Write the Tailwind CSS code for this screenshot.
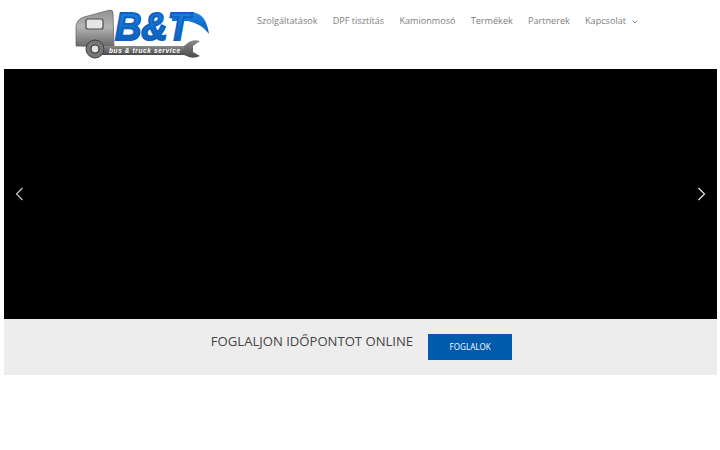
<!DOCTYPE html>
<html lang="hu">
<head>
  <meta charset="UTF-8" />
  <title>B&amp;T</title>
  <script src="https://cdn.jsdelivr.net/npm/@tailwindcss/browser@4"></script>
</head>
<body class="bg-white font-['Open_Sans',sans-serif] h-[450px] overflow-hidden">
  <!-- Header -->
  <header class="flex h-[69px] pl-[60px]">
    <a class="block w-[170px] h-[69px]" href="#">
      <svg width="170" height="69" viewBox="0 0 170 69">
        <defs>
          <linearGradient id="cab" x1="0" y1="0" x2="0" y2="1">
            <stop offset="0" stop-color="#8f8f8f"/>
            <stop offset="0.45" stop-color="#b5b5b5"/>
            <stop offset="1" stop-color="#666"/>
          </linearGradient>
          <linearGradient id="blue" x1="0" y1="0" x2="0" y2="1">
            <stop offset="0" stop-color="#1b86e4"/>
            <stop offset="1" stop-color="#0a5cb8"/>
          </linearGradient>
          <linearGradient id="wrench" x1="0" y1="0" x2="0" y2="1">
            <stop offset="0" stop-color="#8a8a8a"/>
            <stop offset="1" stop-color="#4a4a4a"/>
          </linearGradient>
        </defs>
        <!-- truck cab -->
        <path d="M16 46 L16 26 Q17 19 24 17 L50 10 Q53 10 53 13 L54 47 Z" fill="url(#cab)" stroke="#5c5c5c" stroke-width="0.7"/>
        <rect x="26" y="19" width="17" height="10" rx="2" fill="#e6e6e6" stroke="#4a4a4a" stroke-width="1.2"/>
        <!-- B&T lettering with the swoosh off the T -->
        <path d="M112 12 H130 Q146 12 149 34 Q142 24 128 21 H112 Z" fill="url(#blue)"/>
        <text x="55" y="40" font-family="Liberation Sans" font-weight="700" font-style="italic" font-size="38" textLength="75" lengthAdjust="spacingAndGlyphs" fill="url(#blue)" stroke="#0d62c0" stroke-width="2">B&amp;T</text>
        <!-- wrench -->
        <rect x="36" y="46" width="92" height="9" rx="1" fill="url(#wrench)"/>
        <path d="M124 46 L129 42 Q134 39 140 41 L133 46 L133 52 L140 56 Q134 59 129 57 L124 55 Z" fill="url(#wrench)"/>
        <circle cx="35" cy="49" r="9" fill="#777" stroke="#3f3f3f" stroke-width="1"/>
        <circle cx="35" cy="49" r="4" fill="#e4e4e4" stroke="#333" stroke-width="1.2"/>
        <text x="49" y="53" font-family="Liberation Sans" font-weight="700" font-style="italic" font-size="6.5" textLength="71" fill="#fff">bus &amp; truck service</text>
      </svg>
    </a>
    <nav class="flex items-start gap-[15.25px] ml-[27px] pt-[14px] text-[9.1px] leading-[14px] text-[#808080]">
      <a href="#">Szolgáltatások</a>
      <a href="#">DPF tisztítás</a>
      <a href="#">Kamionmosó</a>
      <a href="#">Termékek</a>
      <a href="#">Partnerek</a>
      <a href="#" class="flex items-center gap-[6px]">Kapcsolat
        <svg width="6" height="4" viewBox="0 0 6 4" class="mt-[2px]"><path d="M0.7 0.7 L3 3 L5.3 0.7" fill="none" stroke="#808080" stroke-width="0.9"/></svg>
      </a>
    </nav>
  </header>

  <!-- Slider -->
  <section class="relative mx-[4px] w-[713px] h-[250px] bg-black">
    <svg class="absolute left-[11px] top-[118px]" width="9" height="14" viewBox="0 0 9 14"><path d="M7.5 1 L1.5 7 L7.5 13" fill="none" stroke="#c8c8c8" stroke-width="1.2"/></svg>
    <svg class="absolute right-[11px] top-[118px]" width="9" height="14" viewBox="0 0 9 14"><path d="M1.5 1 L7.5 7 L1.5 13" fill="none" stroke="#e8e8e8" stroke-width="1.2"/></svg>
  </section>

  <!-- Booking band -->
  <section class="mx-[4px] w-[713px] h-[56px] bg-[#ededed] flex items-start justify-center gap-[15px] pt-[15px] pl-[2px]">
    <h2 class="text-[13.1px] leading-[14px] text-[#444]">FOGLALJON IDŐPONTOT ONLINE</h2>
    <a href="#" class="w-[84px] h-[26px] bg-[#005bac] text-white text-[8.1px] flex items-center justify-center">FOGLALOK</a>
  </section>
</body>
</html>
